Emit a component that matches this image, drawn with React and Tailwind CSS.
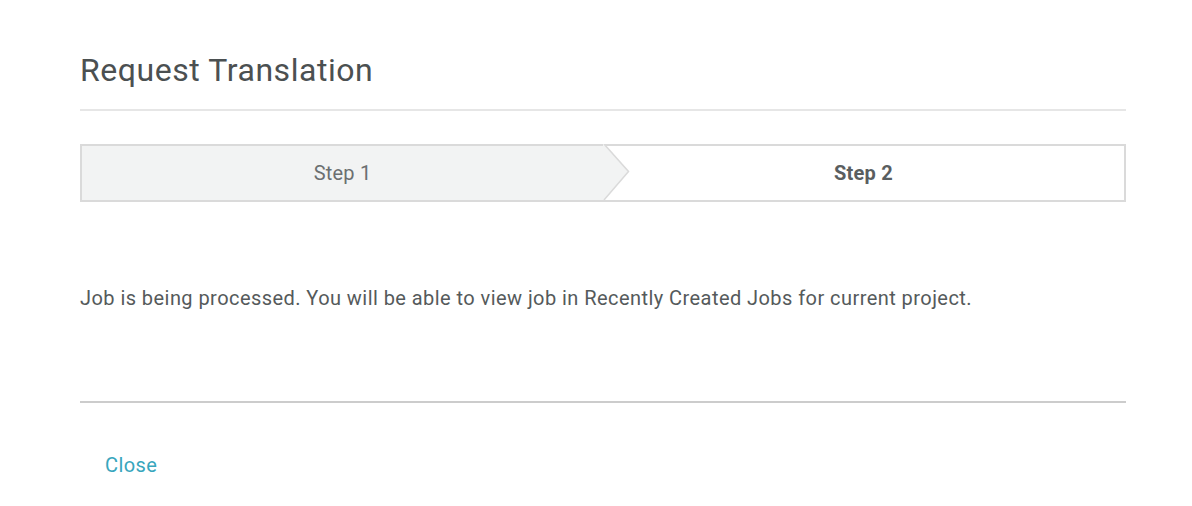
import React from 'react';

const App = () => {
  return (
    <div className="w-[1192px] h-[506px] bg-white font-['Roboto',sans-serif] text-[#555a5b]">
      <div className="pl-[80px] pr-[66px] pt-[52px]">
        {/* Header */}
        <h1 className="text-[32px] leading-[36px] tracking-[0.55px] text-[#4b5051] font-normal">Request Translation</h1>
        <div className="mt-[21px] h-[2px] bg-[#e6e6e6]" />

        {/* Steps */}
        <div className="mt-[33px] flex h-[58px] border-2 border-[#dadada]">
          <div className="relative flex-1 flex items-center justify-center bg-[#f2f3f3] text-[20px] tracking-[0.2px] text-[#6b6f70]">
            <span>Step 1</span>
            <svg className="absolute left-full top-[-2px] z-10" width="28" height="58" viewBox="0 0 28 58">
              <path d="M0 0 L1 0 L26 27 L1 56 L0 56 Z" fill="#f2f3f3" />
              <path d="M1 0 L25.5 27.5 L1 56" fill="none" stroke="#dadada" strokeWidth="1.5" />
            </svg>
          </div>
          <div className="flex-1 flex items-center justify-center text-[20px] tracking-[0.2px] font-bold text-[#5a5e5f]">
            <span>Step 2</span>
          </div>
        </div>

        {/* Message */}
        <p className="mt-[83px] text-[20px] leading-[26px] tracking-[0.44px] text-[#555a5b]">
          Job is being processed. You will be able to view job in Recently Created Jobs for current project.
        </p>
        <div className="mt-[90px] h-[2px] bg-[#cccccc]" />

        {/* Footer */}
        <button className="mt-[49px] ml-[25px] text-[20px] leading-[26px] tracking-[0.4px] text-[#38a6bd]">Close</button>
      </div>
    </div>
  );
};

export default App;
